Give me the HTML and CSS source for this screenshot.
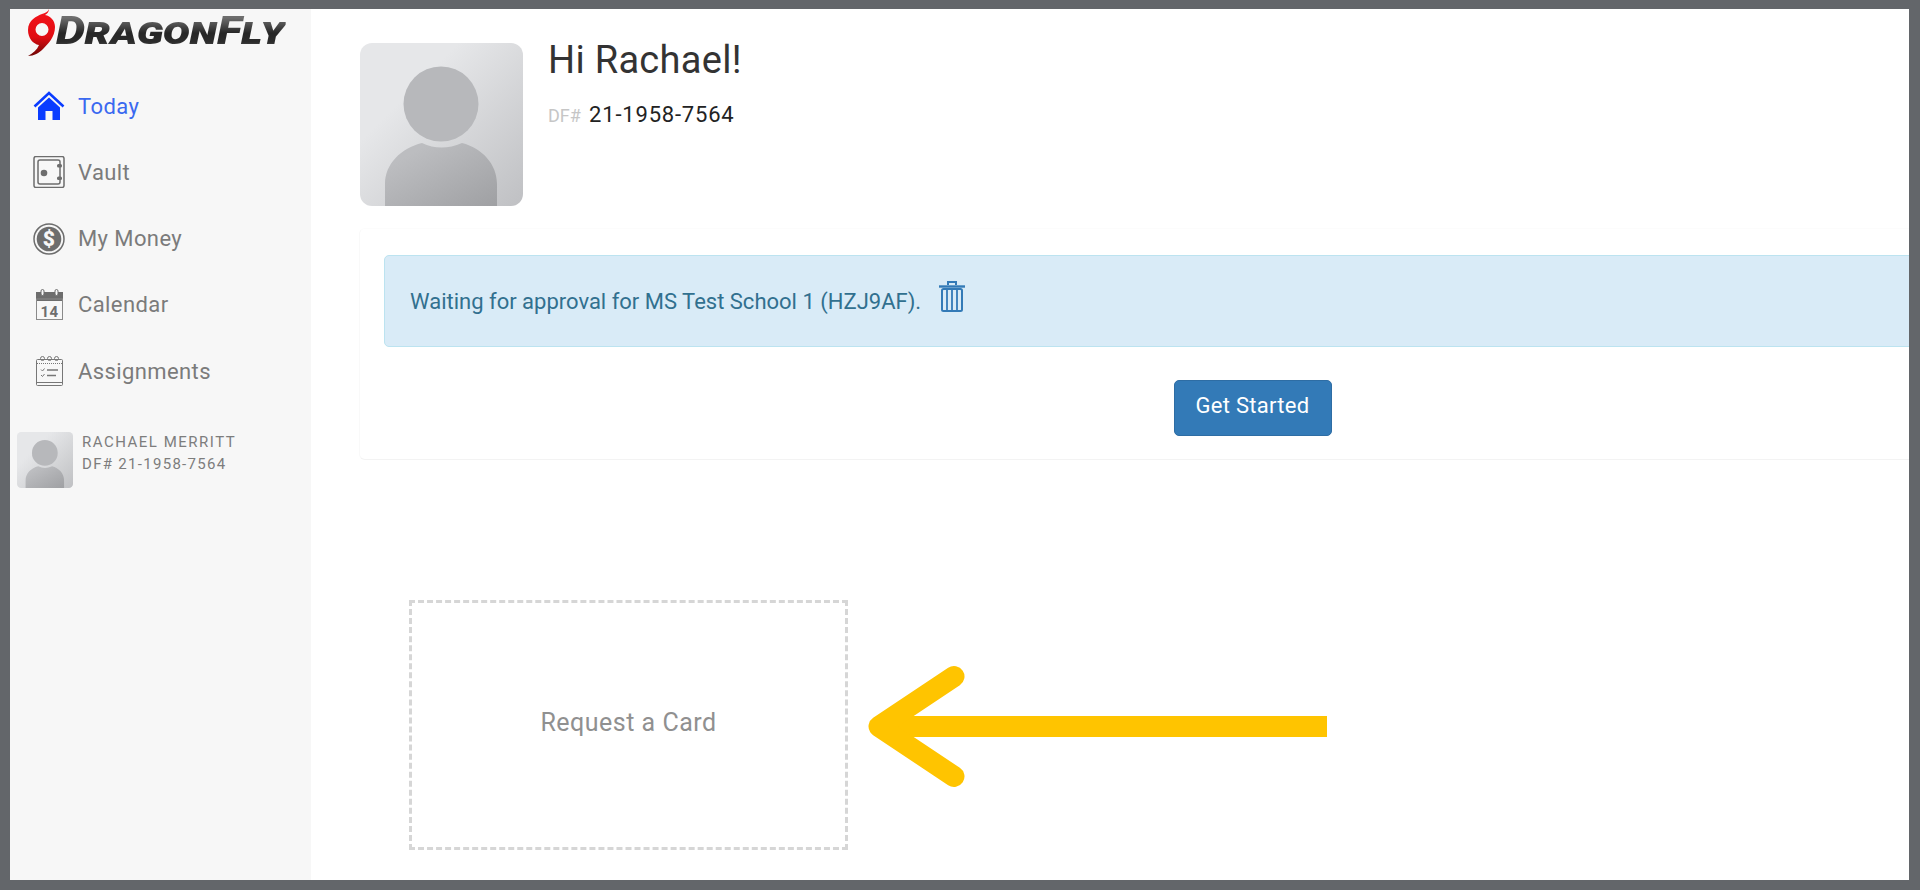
FILE: index.html
```html
<!DOCTYPE html>
<html>
<head>
	<title>DragonFly - Today</title>
	<link rel="stylesheet" href="styles.css">
</head>
<body>
<div class="frame">

	<div class="sidebar">
		<div class="logo">
			<svg class="logo-swirl" width="30" height="50" viewBox="0 0 30 50">
				<defs>
					<linearGradient id="swirlRed" x1="0" y1="0" x2="0" y2="1">
						<stop offset="0" stop-color="#f5141c"/>
						<stop offset="0.6" stop-color="#e00c12"/>
						<stop offset="1" stop-color="#6e0505"/>
					</linearGradient>
				</defs>
				<path fill="url(#swirlRed)" fill-rule="evenodd" d="M22 0 C22 3 20 5 18 6 C24 7 28 12 28 18 C28 28 21 35 16 40 C12 44 7 47 1 47 C6 44 10 41 12 36 C6 35 1 29 1 21 C1 11 10 7 15 5 C18 4 21 3 22 0 Z M15 14 A6.5 6.5 0 1 0 15 27 A6.5 6.5 0 1 0 15 14 Z"/>
			</svg>
			<span class="logo-text">DragonFly</span>
		</div>

		<a class="nav-item active">
			<svg class="nav-icon" width="32" height="32" viewBox="0 0 32 32">
				<path d="M1.5 16.500 L16 3 L30.500 16.500" fill="none" stroke="#0a3cff" stroke-width="2.600"/>
				<path fill="#0a3cff" d="M5 17.500 L16 7.500 L27 17.500 V30 H19.500 V21 H12.500 V30 H5 Z"/>
			</svg>
			<span>Today</span>
		</a>
		<a class="nav-item">
			<svg class="nav-icon" width="32" height="32" viewBox="0 0 32 32" fill="none" stroke="#6d6d6d">
				<rect x="1" y="0.500" width="30" height="31" rx="2" stroke-width="1.500"/>
				<rect x="5" y="4" width="22" height="24" rx="2" stroke-width="1.500"/>
				<circle cx="11" cy="17" r="3.300" fill="#6d6d6d" stroke="none"/>
				<rect x="24" y="8" width="5" height="3.400" rx="1.500" fill="#6d6d6d" stroke="none"/>
				<rect x="24" y="20.500" width="5" height="3.400" rx="1.500" fill="#6d6d6d" stroke="none"/>
			</svg>
			<span>Vault</span>
		</a>
		<a class="nav-item">
			<svg class="nav-icon" width="32" height="32" viewBox="0 0 32 32">
				<circle cx="16" cy="16" r="15" fill="none" stroke="#6d6d6d" stroke-width="1.500"/>
				<circle cx="16" cy="16" r="12.300" fill="#6d6d6d"/>
				<text x="16" y="23" class="coin-sign">$</text>
			</svg>
			<span>My Money</span>
		</a>
		<a class="nav-item">
			<svg class="nav-icon" width="32" height="32" viewBox="0 0 32 32">
				<rect x="3" y="3" width="27" height="9" fill="#6d6d6d"/>
				<rect x="3.500" y="10" width="26" height="20.500" fill="none" stroke="#8a8a8a"/>
				<rect x="8" y="0.500" width="3" height="6" rx="1.500" fill="#f7f7f7" stroke="#6d6d6d"/>
				<rect x="22" y="0.500" width="3" height="6" rx="1.500" fill="#f7f7f7" stroke="#6d6d6d"/>
				<text x="16.500" y="27.500" class="cal-day">14</text>
			</svg>
			<span>Calendar</span>
		</a>
		<a class="nav-item">
			<svg class="nav-icon" width="32" height="32" viewBox="0 0 32 32" fill="none" stroke="#777" stroke-width="1">
				<rect x="3.500" y="4.500" width="26" height="26" rx="1"/>
				<path d="M4 8.500 H29" stroke-dasharray="1 1"/>
				<path d="M4 27.500 H29"/>
				<circle cx="9.500" cy="3.500" r="2"/>
				<circle cx="16.500" cy="3.500" r="2"/>
				<circle cx="23.500" cy="3.500" r="2"/>
				<path d="M8 14.500 l1.500 1.500 l2 -2.500 M8 20 l1.500 1.500 l2 -2.500"/>
				<path d="M14 15 H25 M14 20.500 H23" stroke-width="1.300"/>
			</svg>
			<span>Assignments</span>
		</a>

		<div class="profile">
			<svg class="profile-pic" width="56" height="56" viewBox="0 0 163 163">
				<symbol id="avatarArt" viewBox="0 0 163 163">
					<defs>
						<linearGradient id="avatarBg" x1="0" y1="0" x2="1" y2="1">
							<stop offset="0.300" stop-color="#e6e7e9"/>
							<stop offset="1" stop-color="#bfc0c3"/>
						</linearGradient>
						<linearGradient id="avatarFg" x1="0" y1="0" x2="1" y2="1">
							<stop offset="0.200" stop-color="#bcbdc0"/>
							<stop offset="1" stop-color="#9fa0a3"/>
						</linearGradient>
					</defs>
					<rect width="163" height="163" rx="12" fill="url(#avatarBg)"/>
					<circle cx="81" cy="61" r="37.500" fill="#b7b8bb"/>
					<path fill="url(#avatarFg)" d="M25 163 V141 C25 121 41 105 62 100 Q81 109 102 100 C122 105 137 121 137 141 V163 Z"/>
				</symbol>
				<use href="#avatarArt"/>
			</svg>
			<div class="profile-text">
				<div class="profile-name">RACHAEL MERRITT</div>
				<div class="profile-id">DF# 21-1958-7564</div>
			</div>
		</div>
	</div>

	<div class="main">
		<div class="header">
			<svg width="163" height="163" viewBox="0 0 163 163"><use href="#avatarArt"/></svg>
			<div>
				<h1>Hi Rachael!</h1>
				<div class="df-line"><span class="df-label">DF#</span> 21-1958-7564</div>
			</div>
		</div>

		<div class="card">
			<div class="alert">
				<span>Waiting for approval for MS Test School 1 (HZJ9AF).</span>
				<svg class="trash" width="28" height="32" viewBox="0 0 28 32" fill="none" stroke="#337ab7">
					<path d="M1 6.500 H27" stroke-width="2.400"/>
					<path d="M10 5 V2 H18 V5" stroke-width="2"/>
					<rect x="4" y="9" width="20" height="22" rx="1.500" stroke-width="2"/>
					<path d="M9 10 V30 M14 10 V30 M19 10 V30" stroke-width="1.800"/>
				</svg>
			</div>
			<div class="card-actions">
				<button class="btn-primary">Get Started</button>
			</div>
		</div>

		<div class="request-row">
			<div class="request-box">Request a Card</div>
			<svg class="arrow" width="462" height="130" viewBox="0 0 462 130" fill="none" stroke="#ffc400" stroke-width="21">
				<path d="M460 66.500 H12"/>
				<path d="M87 16.500 L12 66.500 L87 116.500" stroke-linecap="round" stroke-linejoin="round"/>
			</svg>
		</div>
	</div>

</div>
</body>
</html>
```

FILE: styles.css
```css
html, body {
    height: 100%;
    margin: 0;
    overflow: hidden;
}

body {
    background-color: #63666a;
    font-family: Roboto, "Noto Sans", sans-serif;
}

.frame {
    display: flex;
    height: 871px;
    margin: 9px 10px 10px 10px;
    width: 1899px;
    background-color: #fff;
    overflow: hidden;
}

/* left column */
.sidebar {
    width: 301px;
    flex-shrink: 0;
    background-color: #f7f7f7;
}

.logo {
    display: flex;
    height: 64px;
    padding-left: 17px;
}

.logo-swirl {
    flex-shrink: 0;
}

.logo-text {
    margin: 0 0 0 -1px;
    height: 44px;
    font-family: Roboto, "Liberation Sans", sans-serif;
    font-size: 39px;
    line-height: 44px;
    font-weight: 900;
    font-style: italic;
    font-variant: small-caps;
    transform: scaleX(1.19);
    transform-origin: left center;
    background: linear-gradient(to bottom, #6e6e6e 20%, #262626 55%, #2c2c2c 75%, #777 100%);
    -webkit-background-clip: text;
    background-clip: text;
    color: transparent;
}

.nav-item {
    display: flex;
    align-items: center;
    gap: 13px;
    height: 66.25px;
    padding-left: 23px;
    font-size: 22px;
    letter-spacing: 0.4px;
    color: #7b7b7b;
}

.nav-item.active {
    color: #3a69f0;
}

.nav-icon {
    flex-shrink: 0;
}

.coin-sign {
    font-size: 21px;
    font-weight: 900;
    fill: #f7f7f7;
    text-anchor: middle;
}

.cal-day {
    font-size: 15px;
    font-weight: bold;
    fill: #6d6d6d;
    text-anchor: middle;
}

.profile {
    display: flex;
    gap: 9px;
    margin: 28px 0 0 7px;
}

.profile-text {
    margin-top: -1px;
    font-size: 15px;
    color: #7d7d7d;
}

.profile-name {
    line-height: 22px;
    letter-spacing: 1.5px;
}

.profile-id {
    line-height: 22px;
    letter-spacing: 1.3px;
}

/* right column */
.main {
    flex: 1;
    min-width: 0;
    padding: 34px 0 0 48px;
    overflow: hidden;
}

.header {
    display: flex;
    gap: 25px;
    height: 163px;
    margin-left: 1px;
}

.header h1 {
    margin: 0;
    font-size: 38px;
    font-weight: 400;
    line-height: 34px;
    letter-spacing: 0.3px;
    color: #333;
}

.df-line {
    margin-top: 25px;
    font-size: 22px;
    letter-spacing: 0.8px;
    color: #222;
}

.df-label {
    margin-right: 2px;
    font-size: 18px;
    letter-spacing: 0;
    color: #c6c6c6;
}

.card {
    width: 1788px;
    margin-top: 22px;
    padding: 26px 25px 23px 24px;
    box-sizing: border-box;
    background-color: #fff;
    border: 1px solid;
    border-color: #fcfcfc #fff #f3f3f3 #f9f9f9;
    border-radius: 6px;
}

.alert {
    display: flex;
    align-items: center;
    gap: 17px;
    height: 92px;
    padding-left: 25px;
    box-sizing: border-box;
    background-color: #d9ebf7;
    border: 1px solid #bce3f0;
    border-radius: 5px;
    font-size: 22px;
    color: #31708f;
}

.trash {
    margin-top: -10px;
}

.card-actions {
    display: flex;
    justify-content: center;
    margin-top: 33px;
}

.btn-primary {
    width: 158px;
    height: 56px;
    padding-bottom: 6px;
    background-color: #337ab7;
    border: 1px solid #2e6da4;
    border-radius: 5px;
    font-family: Roboto, "Noto Sans", sans-serif;
    font-size: 22px;
    letter-spacing: 0.3px;
    color: #fff;
}

.request-row {
    display: flex;
    align-items: center;
    gap: 19px;
    margin: 140px 0 0 50px;
}

.request-box {
    display: flex;
    align-items: center;
    justify-content: center;
    width: 439px;
    height: 250px;
    padding-bottom: 6px;
    box-sizing: border-box;
    border: 3px dashed #d6d6d6;
    font-size: 25px;
    letter-spacing: 0.5px;
    color: #909090;
}

.arrow {
    flex-shrink: 0;
}
```
